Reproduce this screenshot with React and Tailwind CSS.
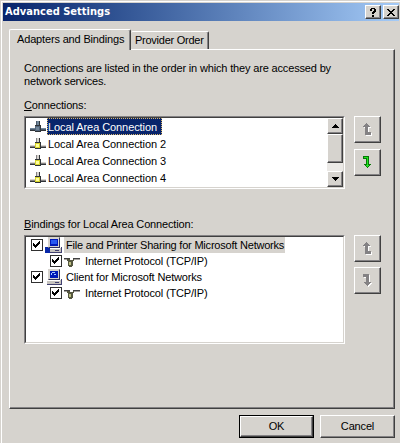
import React from 'react';

const raised = 'border border-t-white border-l-white border-b-[#404040] border-r-[#404040] shadow-[inset_-1px_-1px_0_#848284]';
const sunken = 'border border-t-[#848284] border-l-[#848284] border-b-white border-r-white';
const sunkenInner = 'border border-t-[#404040] border-l-[#404040] border-b-[#d6d3ce] border-r-[#d6d3ce]';

function LanIcon({ dim }) {
  return (
    <svg width="16" height="16" shapeRendering="crispEdges">
      <path fill={dim ? '#71869a' : '#d6d3ce'} d="M7 2h2v5h-2zM0 9h16v1h-16z" />
      <path fill={dim ? '#4a5a6c' : '#848284'} d="M6 2h1v5h-1zM0 10h16v1h-16z" />
      <path fill="#303438" d="M9 2h1v5h-1zM0 11h16v1h-16zM5 6h6v7h-6z" />
      <path fill={dim ? '#52657a' : '#d6d32c'} d="M5 7h5v5h-5z" />
      <path fill={dim ? '#71869a' : '#ffff9c'} d="M6 8h3v3h-3z" />
    </svg>
  );
}

function ComputerIcon({ share }) {
  return (
    <svg width="17" height="16" shapeRendering="crispEdges">
      <path fill="#848284" d="M3 0h12v11h-12z" />
      <path fill="#d6d3ce" d="M3 0h11v10h-11z" />
      <path fill="#303060" d="M14 1h1v10h-11v-1h10z" />
      <path fill="#0018b8" d="M5 2h8v7h-8z" />
      <path fill={share ? '#2858f0' : '#a8c8ff'} d={share ? 'M6 3h6v4h-6z' : 'M7 3h3v1h-3zM6 4h1v2h-1zM9 5h2v1h-2z'} />
      <path fill="#c6c3be" d="M2 11h14v4h-14z" />
      <path fill="#404070" d="M16 10h1v6h-15v-1h14zM10 13h4v1h-4z" />
      <path fill="#fff" d="M2 11h13v1h-13z" />
      {share && <path fill="#0828a8" d="M0 10h3v1h2v5h-5z" />}
    </svg>
  );
}

function ProtocolIcon() {
  return (
    <svg width="17" height="16" shapeRendering="crispEdges">
      <path fill="#404040" d="M0 5h6v1h-6zM9 5h7v1h-7z" />
      <path fill="#a5a2a0" d="M0 6h4v1h-4zM10 6h6v1h-6z" />
      <path fill="#55573f" d="M3 6h3v1h3v-1h1v2h-1v5h-1v1h-3v-1h-1v-5h-1z" />
      <path fill="#bdc184" d="M5 9h2v3h-2z" />
    </svg>
  );
}

function Check() {
  return (
    <span className="flex h-[12px] w-[12px] shrink-0 items-center justify-center border border-[#303030] bg-white">
      <svg width="8" height="8" shapeRendering="crispEdges">
        <path d="M0 2h1v1h1v1h1v-1h1v-1h1v-1h1v-1h1v3h-1v1h-1v1h-1v1h-1v1h-1v-1h-1v-1h-1z" />
      </svg>
    </span>
  );
}

function ArrowButton({ down, active }) {
  const d = down
    ? 'M0 0h6v8h2v1h-1v1h-1v1h-1v1h-1v-1h-1v-1h-1v-1h-1v-1h2v-5h-3z'
    : 'M3 0h1v1h1v1h1v1h1v1h-2v5h3v3h-6v-8h-2v-1h1v-1h1v-1h1z';
  return (
    <button className={`flex h-[27px] w-[27px] items-center justify-center ${raised}`}>
      <svg width="10" height="14" shapeRendering="crispEdges">
        {!active && <path fill="#fff" transform="translate(1 1)" d={d} />}
        <path fill={active ? '#087808' : '#848284'} d={d} />
        {active && <path fill="#20e820" d="M1 1h4v8h1v1h-1v1h-1v-1h-1v-1h1v-7h-3z" />}
      </svg>
    </button>
  );
}

function ScrollButton({ down }) {
  return (
    <div className={`flex h-[16px] w-[16px] items-center justify-center bg-[#d6d3ce] ${raised}`}>
      <svg width="7" height="4" shapeRendering="crispEdges">
        <path d={down ? 'M0 0h7v1h-1v1h-1v1h-1v1h-1v-1h-1v-1h-1v-1h-1z' : 'M3 0h1v1h1v1h1v1h1v1h-7v-1h1v-1h1v-1h1z'} />
      </svg>
    </div>
  );
}

function ConnectionRow({ children, selected }) {
  return (
    <div className="flex h-[17px] items-center tracking-[-0.08px]">
      <LanIcon dim={selected} />
      <span className={`ml-px h-[17px] pl-px leading-[18px] ${selected ? 'w-[115px] bg-[#08246b] text-white outline-1 -outline-offset-1 outline-dotted outline-[#d6b56b]' : ''}`}>
        {children}
      </span>
    </div>
  );
}

function BindingRow({ children, child, share, selected }) {
  return (
    <div className={`flex h-[16px] items-center ${child ? 'pl-[24px]' : 'pl-[5px]'}`}>
      <Check />
      <span className="ml-[2px] w-[17px]">{child ? <ProtocolIcon /> : <ComputerIcon share={share} />}</span>
      <span className={`ml-[2px] h-[16px] pl-[2px] leading-[17px] ${selected ? 'w-[221px] bg-[#d6d3ce] tracking-[-0.21px]' : ''}`}>{children}</span>
    </div>
  );
}

export default function App() {
  return (
    <div className="h-[443px] w-[400px] overflow-hidden bg-[#d6d3ce] pt-px pl-px font-['Liberation_Sans',sans-serif] text-[11px] tracking-[-0.16px] whitespace-nowrap text-black">
      <div className="h-full border-t border-l border-white pt-px pl-px">
        <header className="flex h-[18px] w-[396px] items-center bg-linear-to-r from-[#08246b] to-[#a5cbf7] pl-[2px]">
          <h1 className="flex-1 font-['DejaVu_Sans_Condensed','DejaVu_Sans',sans-serif] text-[11px] font-bold tracking-[0.02px] text-white">Advanced Settings</h1>
          <button className={`flex h-[14px] w-[16px] items-center justify-center bg-[#d6d3ce] ${raised}`}>
            <svg width="6" height="9" shapeRendering="crispEdges"><path d="M1 0h4v1h1v3h-1v1h-1v1h-2v-2h1v-1h1v-2h-2v2h-2v-2h1zM2 7h2v2h-2z" /></svg>
          </button>
          <button className={`ml-[2px] flex h-[14px] w-[16px] items-center justify-center bg-[#d6d3ce] ${raised}`}>
            <svg width="8" height="7" shapeRendering="crispEdges"><path d="M0 0h2v1h1v1h2v-1h1v-1h2v1h-1v1h-1v1h-1v1h1v1h1v1h1v1h-2v-1h-1v-1h-2v1h-1v1h-2v-1h1v-1h1v-1h1v-1h-1v-1h-1v-1h-1z" /></svg>
          </button>
        </header>

        <main className="pt-[8px] pl-[6px]">
          <nav className="flex h-[20px] items-end">
            <button className="relative z-10 -mb-px h-[21px] w-[122px] rounded-t-[2px] border-t border-l border-r border-t-white border-l-white border-r-[#404040] bg-[#d6d3ce] pb-[1px] pl-[7px] text-left leading-[19px] shadow-[inset_-1px_0_0_#848284]">
              Adapters and Bindings
            </button>
            <button className="h-[18px] w-[78px] rounded-t-[2px] border-t border-r border-t-white border-r-[#404040] pl-[4px] text-left leading-[17px] tracking-[-0.25px] shadow-[inset_-1px_0_0_#848284]">
              Provider Order
            </button>
          </nav>

          <section className={`h-[360px] w-[386px] pt-[12px] pl-[14px] ${raised}`}>
            <p className="h-[36px] leading-[13px]">
              Connections are listed in the order in which they are accessed by
              <br />
              network services.
            </p>
            <h2 className="h-[18px] leading-[15px]"><span className="underline underline-offset-1">C</span>onnections:</h2>

            <div className="flex h-[119px] gap-[9px]">
              <div className={`h-[73px] w-[321px] ${sunken}`}>
                <div className={`flex h-full bg-white ${sunkenInner}`}>
                  <div className="flex-1 pl-[4px]">
                    <ConnectionRow selected>Local Area Connection</ConnectionRow>
                    <ConnectionRow>Local Area Connection 2</ConnectionRow>
                    <ConnectionRow>Local Area Connection 3</ConnectionRow>
                    <ConnectionRow>Local Area Connection 4</ConnectionRow>
                  </div>
                  <div className="flex w-[16px] flex-col bg-[#ebe9e6]">
                    <ScrollButton />
                    <div className={`h-[29px] bg-[#d6d3ce] ${raised}`} />
                    <div className="flex-1" />
                    <ScrollButton down />
                  </div>
                </div>
              </div>
              <div className="flex flex-col gap-[6px]">
                <ArrowButton />
                <ArrowButton down active />
              </div>
            </div>

            <div className="-mt-[18px] h-[18px] leading-[15px]"><span className="underline underline-offset-1">B</span>indings for Local Area Connection:</div>
            <div className="flex gap-[9px]">
              <div className={`h-[109px] w-[321px] ${sunken}`}>
                <div className={`h-full bg-white ${sunkenInner}`}>
                  <BindingRow share selected>File and Printer Sharing for Microsoft Networks</BindingRow>
                  <BindingRow child>Internet Protocol (TCP/IP)</BindingRow>
                  <BindingRow>Client for Microsoft Networks</BindingRow>
                  <BindingRow child>Internet Protocol (TCP/IP)</BindingRow>
                </div>
              </div>
              <div className="flex flex-col gap-[5px]">
                <ArrowButton />
                <ArrowButton down />
              </div>
            </div>
          </section>

          <footer className="mt-[6px] flex gap-[6px] pl-[230px]">
            <button className="h-[23px] w-[75px] border border-black">
              <span className={`flex h-full items-center justify-center ${raised}`}>OK</span>
            </button>
            <button className={`h-[23px] w-[75px] ${raised}`}>Cancel</button>
          </footer>
        </main>
      </div>
    </div>
  );
}
